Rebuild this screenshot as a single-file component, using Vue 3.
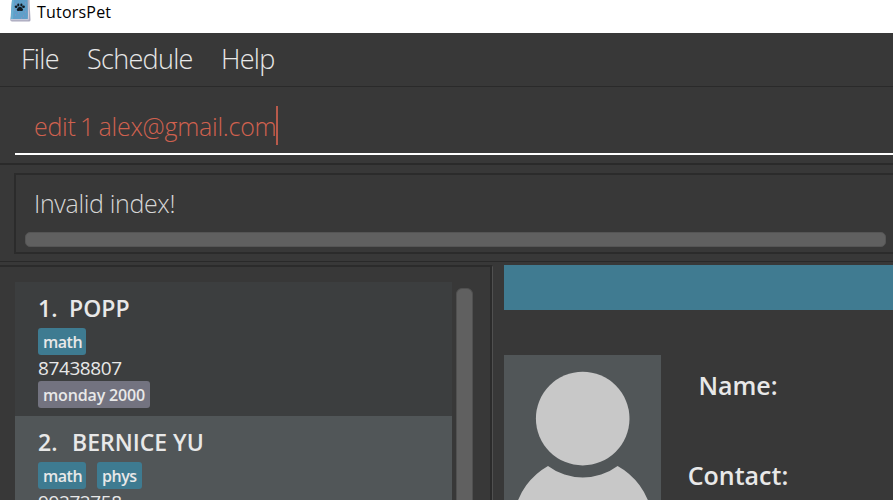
<script setup>
const menus = [
  { label: 'File', cls: 'file' },
  { label: 'Schedule', cls: 'schedule' },
  { label: 'Help', cls: 'help' },
]
const students = [
  { id: '1.', name: 'POPP', subjects: ['math'], phone: '87438807', lesson: 'monday 2000', cls: 'odd' },
  { id: '2.', name: 'BERNICE YU', subjects: ['math', 'phys'], phone: '99272758', lesson: '', cls: 'even' },
]
</script>

<template>
  <div class="window">
    <header class="titlebar">
      <svg class="logo" width="22" height="23" viewBox="0 0 22 23">
        <path d="M3 0H19.5L20.5 20Q20.5 21.5 19 21.5H2Q0 21.5 .4 19.5L2 0Z" fill="#a9a8bd" />
        <path d="M2 0H17.5L18 19.3H.8Z" fill="#5f9fc9" />
        <path d="M2 0H4L3 19.3H.8Z" fill="#69afd1" />
        <path d="M1 19.7H18.3L19.2 0" fill="none" stroke="#d2d1de" />
        <path d="M5 15h1M13 16h1M15 3h1M5 4h1M11 18h1M15 12h1M8 13h1M4 10h1" stroke="#9a8fbd" />
        <g fill="#101820">
          <ellipse cx="6.1" cy="6.8" rx="1.4" ry="1.3" />
          <ellipse cx="8.3" cy="5" rx="1.1" ry="1.4" />
          <ellipse cx="11.4" cy="5" rx="1.1" ry="1.4" />
          <ellipse cx="13.5" cy="6.8" rx="1.4" ry="1.3" />
          <path d="M9.9 6.4Q12 7 13.1 9.4Q13 11.6 9.9 10.8Q6.7 11.6 6.7 9.4Q8 7 9.9 6.4Z" />
        </g>
      </svg>
      <span class="app-name">TutorsPet</span>
    </header>

    <nav class="menubar">
      <span v-for="m in menus" :key="m.label" :class="m.cls">{{ m.label }}</span>
    </nav>

    <section class="command">
      <div class="field"><span class="entry">edit 1 alex@gmail.com</span><i class="caret"></i></div>
    </section>

    <section class="result">
      <div class="result-box">
        <span class="message">Invalid index!</span>
        <div class="hscroll"></div>
      </div>
    </section>

    <main class="split">
      <section class="list-pane">
        <div class="list">
          <article v-for="s in students" :key="s.id" class="card" :class="s.cls">
            <h2><span class="idx">{{ s.id }}</span><span class="person">{{ s.name }}</span></h2>
            <div class="tags"><span v-for="t in s.subjects" :key="t" class="tag" :class="t">{{ t }}</span></div>
            <div class="phone">{{ s.phone }}</div>
            <div v-if="s.lesson" class="tags"><span class="tag lesson">{{ s.lesson }}</span></div>
          </article>
        </div>
        <div class="vscroll"></div>
      </section>
      <section class="detail">
        <div class="banner"></div>
        <div class="profile">
          <svg class="avatar" width="157" height="157" viewBox="0 0 157 157">
            <rect width="157" height="157" fill="#515658" />
            <circle cx="78.7" cy="63.6" r="46.8" fill="#c8c8c8" />
            <path d="M44 111A58 58 0 0 0 113.6 111A68.6 68.6 0 0 1 147.5 157H10.5A68.6 68.6 0 0 1 44 111Z" fill="#c8c8c8" />
          </svg>
          <div class="labels">
            <span class="name">Name:</span>
            <span class="contact">Contact:</span>
          </div>
        </div>
      </section>
    </main>
  </div>
</template>

<style>
body { margin: 0; overflow: hidden; }
</style>

<style scoped>
* { box-sizing: border-box; }
.window {
  width: 893px;
  height: 500px;
  overflow: hidden;
  display: flex;
  flex-direction: column;
  background: #383838;
  color: #e8e8e8;
  font-family: "Open Sans", "Noto Sans", sans-serif;
  white-space: nowrap;
}
.titlebar {
  height: 33px;
  flex: none;
  display: flex;
  background: #fff;
  color: #000;
  padding-left: 10px;
}
.logo { margin-right: 5px; }
.app-name { font-size: 16px; line-height: 24px; letter-spacing: 0.2px; }
.menubar {
  height: 54px;
  flex: none;
  display: flex;
  padding-left: 21px;
  border-bottom: 1px solid #2a2a2a;
  font-size: 27px;
  font-weight: 300;
  line-height: 51px;
}
.menubar span { letter-spacing: -0.7px; }
.file { width: 66px; }
.schedule { width: 134px; }
.command {
  height: 78px;
  flex: none;
  padding: 19px 0 0 15px;
  border-bottom: 2px solid #2a2a2a;
}
.field {
  height: 49px;
  display: flex;
  padding-left: 19px;
  border-bottom: 2px solid #fff;
}
.entry {
  width: 242px;
  color: #d0614f;
  font-size: 25px;
  font-weight: 300;
  line-height: 40px;
  letter-spacing: -0.25px;
  word-spacing: -1.8px;
}
.caret { width: 2px; height: 39px; background: #b85a4b; }
.result {
  height: 97px;
  flex: none;
  padding: 8px 0 0 14px;
  border-bottom: 1px solid #292929;
}
.result-box {
  height: 81px;
  border: 2px solid #2b2b2b;
  border-right: 0;
  padding: 9px 7px 0 9px;
}
.message {
  display: block;
  height: 48px;
  padding-left: 9px;
  color: #d6d6d6;
  font-size: 25px;
  font-weight: 300;
  line-height: 38px;
  letter-spacing: -0.35px;
}
.hscroll { height: 15px; border: 1px solid #555; border-radius: 5px; background: #606060; }
.split { flex: none; height: 240px; display: flex; padding-top: 3px; }
.list-pane {
  width: 493px;
  display: flex;
  padding: 15px 0 0 15px;
  border-top: 2px solid #2b2b2b;
  border-right: 1px solid #505050;
  box-shadow: inset -2px 0 #2b2b2b;
}
.list { width: 437px; height: 220px; overflow: hidden; }
.card { height: 134px; padding: 11px 0 0 23px; background: #3c3e3f; }
.card.even { background: #515658; }
h2 {
  height: 35px;
  margin: 0;
  display: flex;
  font-size: 23px;
  font-weight: 600;
  line-height: 30px;
}
.idx { width: 31px; }
.even .idx { width: 34px; }
.tags { height: 26px; display: flex; gap: 11px; }
.tag {
  height: 27px;
  width: 48px;
  padding-left: 5px;
  border-radius: 3px;
  background: #3e7b91;
  font-size: 16px;
  font-weight: 600;
  line-height: 28px;
  letter-spacing: -0.5px;
}
.tag.phys { width: 45px; }
.tag.lesson { width: 112px; background: #737380; letter-spacing: -0.15px; }
.phone { height: 27px; font-size: 19px; font-weight: 400; line-height: 28px; letter-spacing: -0.4px; }
.vscroll {
  width: 17px;
  height: 230px;
  margin: 6px 0 0 4px;
  border: 1px solid #505050;
  border-radius: 6px;
  background: #606060;
}
.detail { flex: 1; padding-left: 11px; }
.banner { height: 45px; background: #407b91; }
.profile { display: flex; padding-top: 45px; }
.labels {
  width: 154px;
  display: flex;
  flex-direction: column;
  align-items: center;
  font-size: 25px;
  font-weight: 600;
  line-height: 36px;
  padding-top: 12px;
  gap: 54px;
}
</style>
